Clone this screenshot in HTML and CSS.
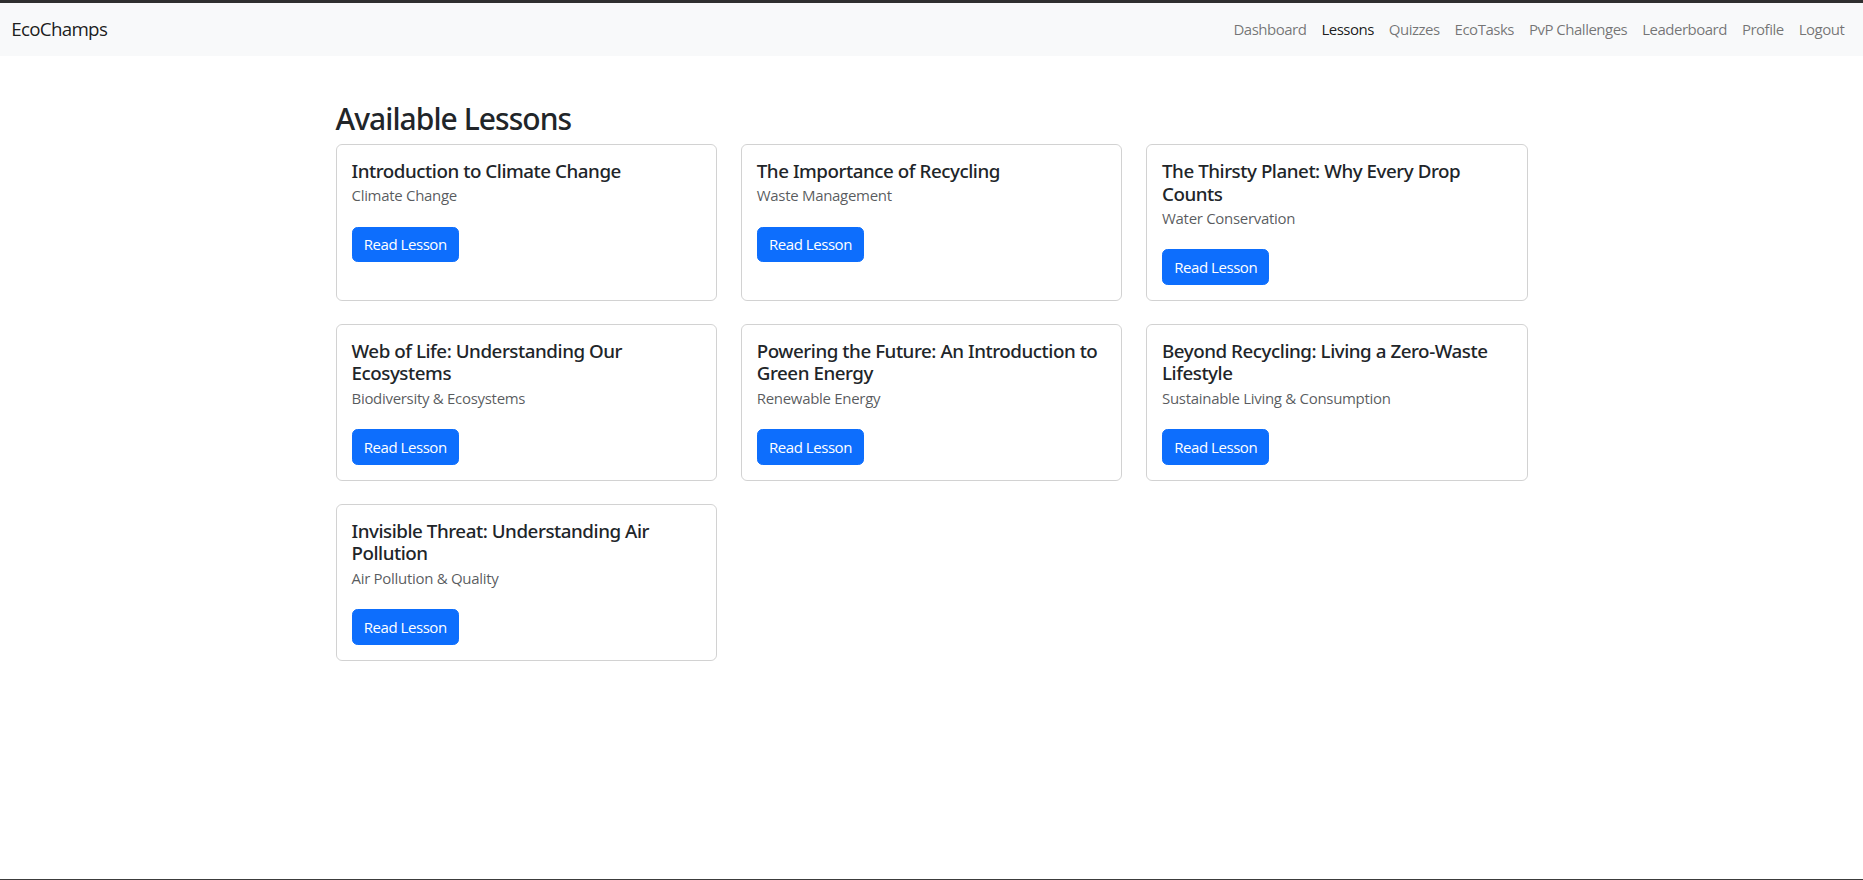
FILE: index.html
```html
<!DOCTYPE html>
<html lang="en">
<head>
<meta charset="utf-8">
<title>EcoChamps - Lessons</title>
<link rel="stylesheet" href="styles.css">
</head>
<body>
<nav class="navbar">
  <a class="brand" href="#">EcoChamps</a>
  <ul class="nav-links">
    <li><a class="nav-link" href="#">Dashboard</a></li>
    <li><a class="nav-link active" href="#">Lessons</a></li>
    <li><a class="nav-link" href="#">Quizzes</a></li>
    <li><a class="nav-link" href="#">EcoTasks</a></li>
    <li><a class="nav-link" href="#">PvP Challenges</a></li>
    <li><a class="nav-link" href="#">Leaderboard</a></li>
    <li><a class="nav-link" href="#">Profile</a></li>
    <li><a class="nav-link" href="#">Logout</a></li>
  </ul>
</nav>
<main class="container">
  <h2 class="page-title">Available Lessons</h2>
  <div class="lesson-grid">
    <div class="card">
      <h5 class="card-title">Introduction to Climate Change</h5>
      <h6 class="card-subtitle">Climate Change</h6>
      <a class="btn" href="#">Read Lesson</a>
    </div>
    <div class="card">
      <h5 class="card-title">The Importance of Recycling</h5>
      <h6 class="card-subtitle">Waste Management</h6>
      <a class="btn" href="#">Read Lesson</a>
    </div>
    <div class="card">
      <h5 class="card-title">The Thirsty Planet: Why Every Drop Counts</h5>
      <h6 class="card-subtitle">Water Conservation</h6>
      <a class="btn" href="#">Read Lesson</a>
    </div>
    <div class="card">
      <h5 class="card-title">Web of Life: Understanding Our Ecosystems</h5>
      <h6 class="card-subtitle">Biodiversity &amp; Ecosystems</h6>
      <a class="btn" href="#">Read Lesson</a>
    </div>
    <div class="card">
      <h5 class="card-title">Powering the Future: An Introduction to Green Energy</h5>
      <h6 class="card-subtitle">Renewable Energy</h6>
      <a class="btn" href="#">Read Lesson</a>
    </div>
    <div class="card">
      <h5 class="card-title">Beyond Recycling: Living a Zero-Waste Lifestyle</h5>
      <h6 class="card-subtitle">Sustainable Living &amp; Consumption</h6>
      <a class="btn" href="#">Read Lesson</a>
    </div>
    <div class="card">
      <h5 class="card-title">Invisible Threat: Understanding Air Pollution</h5>
      <h6 class="card-subtitle">Air Pollution &amp; Quality</h6>
      <a class="btn" href="#">Read Lesson</a>
    </div>
  </div>
</main>
</body>
</html>
```

FILE: styles.css
```css
* { box-sizing: border-box; }

html, body { height: 100%; }

body {
  margin: 0;
  font-family: "Open Sans", "Noto Sans", sans-serif;
  font-size: 15px;
  color: #212529;
  background: #fff;
  border-top: 3px solid #2f2f2f;
  border-bottom: 1px solid #3c3c3c;
  min-height: 100vh;
}

a { text-decoration: none; }

.navbar {
  display: flex;
  align-items: center;
  justify-content: space-between;
  background: #f8f9fa;
  padding: 7.5px 11.25px;
  height: 52.5px;
}

.brand {
  font-size: 18.75px;
  line-height: 28px;
  letter-spacing: -0.7px;
  color: rgba(0, 0, 0, 0.9);
}

.nav-links {
  display: flex;
  list-style: none;
  margin: 0;
  padding: 0;
}

.nav-link {
  display: block;
  padding: 7.5px;
  font-size: 15px;
  line-height: 22.5px;
  letter-spacing: -0.5px;
  color: rgba(0, 0, 0, 0.55);
}

.nav-link.active { color: rgba(0, 0, 0, 0.9); }

.container {
  width: 1192px;
  margin: 45px auto 0;
}

.page-title {
  font-family: "Noto Sans", "Open Sans", sans-serif;
  font-size: 30px;
  font-weight: 500;
  line-height: 1.2;
  letter-spacing: -0.95px;
  margin: 0 0 7.5px;
}

.lesson-grid {
  display: grid;
  grid-template-columns: repeat(3, 1fr);
  gap: 23px 23.75px;
}

.card {
  border: 1px solid rgba(0, 0, 0, 0.175);
  border-radius: 6px;
  padding: 15px;
  display: flex;
  flex-direction: column;
  align-items: flex-start;
}

.card-title {
  font-family: "Noto Sans", "Open Sans", sans-serif;
  font-size: 18.75px;
  font-weight: 500;
  line-height: 1.2;
  letter-spacing: -0.45px;
  margin: 0 0 7.5px;
}

.card-subtitle {
  font-size: 15px;
  font-weight: 500;
  line-height: 1.2;
  letter-spacing: -0.3px;
  color: rgba(33, 37, 41, 0.75);
  margin: -3.75px 0 22.5px;
}

.btn {
  display: inline-block;
  background: #0d6efd;
  border: 1px solid #0d6efd;
  color: #fff;
  font-size: 15px;
  line-height: 22.5px;
  letter-spacing: -0.45px;
  padding: 5.6px 11.25px;
  border-radius: 5.6px;
}
```
